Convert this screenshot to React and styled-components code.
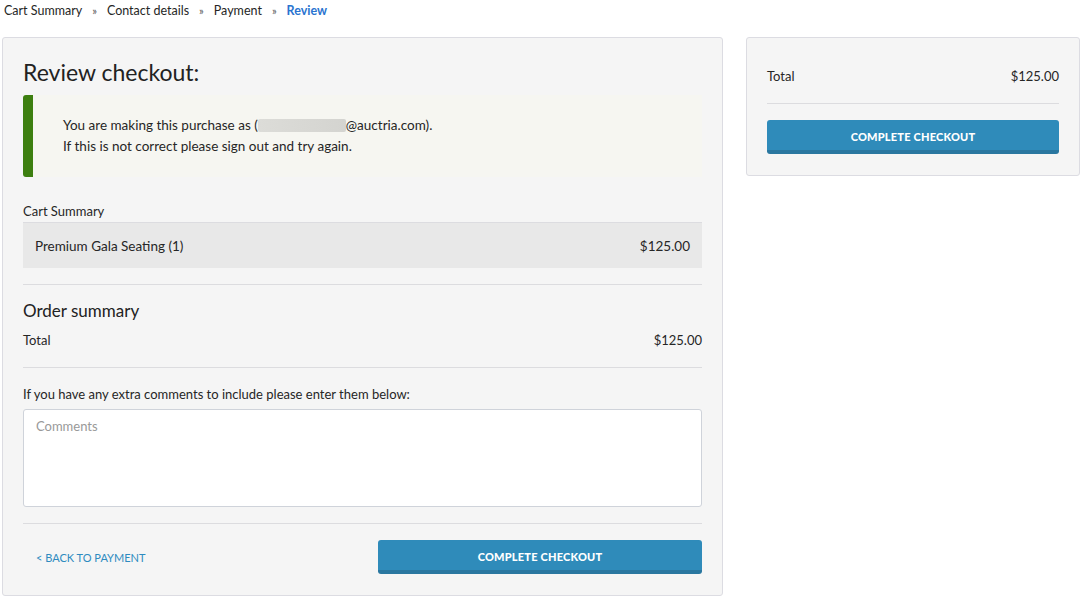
import React from "react";
import styled, { createGlobalStyle } from "styled-components";

const GlobalStyle = createGlobalStyle`
  html, body {
    margin: 0;
    padding: 0;
    background: #fff;
  }
  body {
    font-family: Lato, "Noto Sans", sans-serif;
    color: #262626;
    font-size: 13px;
  }
  * {
    box-sizing: border-box;
  }
`;

const Page = styled.div`
  padding: 0 5px 0 2px;
`;

const Breadcrumb = styled.nav`
  display: flex;
  align-items: center;
  height: 20px;
  padding-left: 2px;
  font-size: 12.5px;
  margin-bottom: 17px;
`;

const Crumb = styled.span`
  color: ${(p) => (p.active ? "#2a74d0" : "#262626")};
  font-weight: ${(p) => (p.active ? 700 : 400)};
`;

const Sep = styled.span`
  font-size: 11px;
  color: #555;
  margin: 0 10px;
`;

const Columns = styled.div`
  display: grid;
  grid-template-columns: 721px 334px;
  gap: 23px;
  align-items: start;
`;

const Panel = styled.section`
  background: #f5f5f5;
  border: 1px solid #dcdce2;
  border-radius: 3px;
  padding: ${(p) => p.pad};
`;

const Title = styled.h1`
  margin: 0 0 5px;
  font-size: 23px;
  font-weight: 400;
  line-height: 36px;
  color: #222;
`;

const Notice = styled.div`
  background: #f6f6f1;
  border-left: 10px solid #3d7f10;
  border-radius: 3px 0 0 3px;
  padding: 20px 30px;
  font-size: 13.5px;
  line-height: 21px;
  min-height: 82px;
`;

const Redacted = styled.span`
  display: inline-block;
  width: 88px;
  height: 13px;
  vertical-align: -2px;
  background: linear-gradient(90deg, #dcdcd8, #d4d4d0);
  border-radius: 2px;
`;

const Label = styled.div`
  font-size: 13px;
  line-height: 18px;
  margin-top: ${(p) => p.top || 0}px;
  margin-bottom: ${(p) => p.bottom || 0}px;
`;

const ItemRow = styled.div`
  display: flex;
  justify-content: space-between;
  align-items: center;
  height: 46px;
  padding: 0 12px;
  background: #e8e8e8;
  border-top: 1px solid #dcdce0;
  font-size: 13.5px;
`;

const Rule = styled.hr`
  border: 0;
  border-top: 1px solid #dcdcdf;
  margin: ${(p) => p.m};
`;

const SubTitle = styled.h2`
  margin: 0;
  font-size: 17px;
  font-weight: 400;
  line-height: 24px;
  color: #222;
`;

const TotalRow = styled.div`
  display: flex;
  justify-content: space-between;
  align-items: center;
  font-size: 13px;
  line-height: 20px;
  margin-top: ${(p) => p.top || 0}px;
`;

const Comments = styled.textarea`
  display: block;
  width: 100%;
  height: 98px;
  resize: none;
  border: 1px solid #cfd3da;
  border-radius: 3px;
  background: #fff;
  padding: 8px 12px;
  font-family: inherit;
  font-size: 13px;
  color: #333;
  &::placeholder {
    color: #999;
  }
`;

const Footer = styled.div`
  display: flex;
  align-items: center;
  justify-content: space-between;
  padding-left: 13px;
`;

const BackLink = styled.a`
  color: #2e8bc0;
  font-size: 11px;
  text-decoration: none;
  text-transform: uppercase;
`;

const CheckoutButton = styled.button`
  width: ${(p) => p.width || "100%"};
  height: 34px;
  border: 0;
  border-bottom: 4px solid #2a77a0;
  border-radius: 3px;
  background: #2f8bba;
  color: #fff;
  font-family: inherit;
  font-size: 11px;
  font-weight: 900;
  letter-spacing: 0.2px;
  text-transform: uppercase;
  cursor: pointer;
  padding-top: 3px;
`;

export default function App() {
  return (
    <Page>
      <GlobalStyle />
      <Breadcrumb>
        <Crumb>Cart Summary</Crumb>
        <Sep>»</Sep>
        <Crumb>Contact details</Crumb>
        <Sep>»</Sep>
        <Crumb>Payment</Crumb>
        <Sep>»</Sep>
        <Crumb active>Review</Crumb>
      </Breadcrumb>

      <Columns>
        <Panel pad="16px 20px 21px 20px">
          <Title>Review checkout:</Title>
          <Notice>
            You are making this purchase as (<Redacted />@auctria.com).
            <br />
            If this is not correct please sign out and try again.
          </Notice>

          <Label top={25} bottom={2}>
            Cart Summary
          </Label>
          <ItemRow>
            <span>Premium Gala Seating (1)</span>
            <span>$125.00</span>
          </ItemRow>

          <Rule m="16px 0 14px" />
          <SubTitle>Order summary</SubTitle>
          <TotalRow top={7}>
            <span>Total</span>
            <span>$125.00</span>
          </TotalRow>

          <Rule m="17px 0 17px" />
          <Label bottom={6}>
            If you have any extra comments to include please enter them below:
          </Label>
          <Comments placeholder="Comments" />

          <Rule m="16px 0 16px" />
          <Footer>
            <BackLink href="#">&lt; Back to payment</BackLink>
            <CheckoutButton width="324px">Complete checkout</CheckoutButton>
          </Footer>
        </Panel>

        <Panel pad="28px 20px 21px 20px">
          <TotalRow>
            <span>Total</span>
            <span>$125.00</span>
          </TotalRow>
          <Rule m="17px 0 16px" />
          <CheckoutButton>Complete checkout</CheckoutButton>
        </Panel>
      </Columns>
    </Page>
  );
}
